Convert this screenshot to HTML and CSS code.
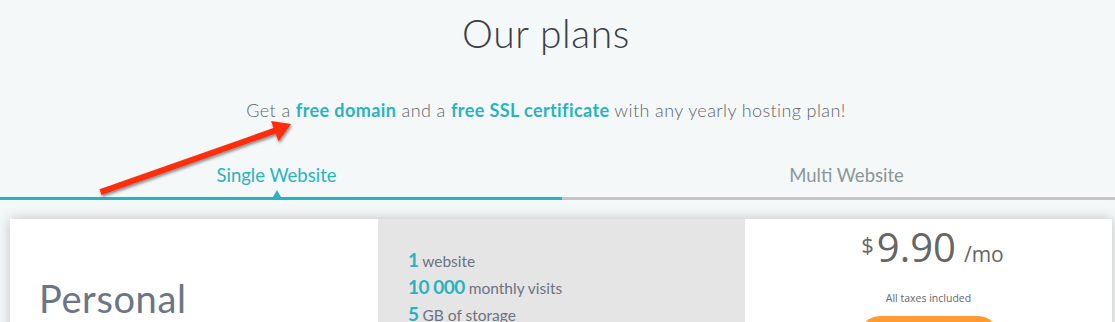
FILE: index.html
```html
<!DOCTYPE html>
<html lang="en">
<head>
<meta charset="utf-8">
<title>Our plans</title>
<link rel="stylesheet" href="styles.css">
</head>
<body>
<div class="page">
  <header class="hero">
    <h1 class="title">Our plans</h1>
    <p class="sub">Get a <strong>free domain</strong> and a <strong>free SSL certificate</strong> with any yearly hosting plan!</p>
  </header>
  <nav class="tabs">
    <div class="tab active"><span class="tab-label">Single Website</span></div>
    <div class="tab"><span class="tab-label">Multi Website</span></div>
  </nav>
  <section class="card">
    <div class="col name-col">
      <h2 class="plan-name">Personal</h2>
    </div>
    <div class="col feat-col">
      <ul class="features">
        <li><b>1</b> website</li>
        <li><b>10 000</b> monthly visits</li>
        <li><b>5</b> GB of storage</li>
      </ul>
    </div>
    <div class="col price-col">
      <div class="price"><span class="cur">$</span><span class="amount">9.90</span><span class="per">/mo</span></div>
      <div class="taxes">All taxes included</div>
      <div class="btn"></div>
    </div>
  </section>
  <svg class="arrow" width="1115" height="322" viewBox="0 0 1115 322">
    <defs>
      <filter id="sh" x="-20%" y="-20%" width="140%" height="140%">
        <feDropShadow dx="1" dy="2" stdDeviation="1.6" flood-color="#000" flood-opacity="0.45"/>
      </filter>
    </defs>
    <g filter="url(#sh)" fill="#ff2d0c" stroke="none">
      <path d="M99.5 189.2 L277.6 126.6 L279.6 132.3 L101.5 194.9 Z"/>
      <path d="M291 124 L271 121 L278.5 141.5 Z"/>
    </g>
  </svg>
</div>
</body>
</html>
```

FILE: styles.css
```css
* { box-sizing: border-box; }
html, body { margin: 0; padding: 0; }
body {
  background: #f4f8f9;
  font-family: Lato, "Open Sans", "Liberation Sans", sans-serif;
  overflow: hidden;
}
.page { position: relative; width: 1115px; height: 322px; overflow: hidden; }
.hero { text-align: center; padding: 10px 23px 0 0; }
.title {
  margin: 0;
  font-family: Lato, "Liberation Sans", sans-serif;
  font-weight: 300;
  font-size: 39px;
  line-height: 46px;
  color: #3a4045;
  letter-spacing: 0.6px;
}
.sub {
  margin: 42px 0 0;
  font-family: Lato, "Liberation Sans", sans-serif;
  font-weight: 300;
  font-size: 18px;
  line-height: 24px;
  letter-spacing: 0.4px;
  color: #5f656a;
}
.sub strong { font-weight: 700; color: #2ab3bd; }
.tabs {
  display: grid;
  grid-template-columns: 562px 569px;
  margin-top: 41px;
}
.tab {
  text-align: center;
  font-size: 18.5px;
  line-height: 24px;
  padding-bottom: 10px;
  color: #8b9698;
  border-bottom: 3px solid #c3c5c6;
}
.tab.active { color: #2ab3bd; border-bottom-color: #28b2bc; padding-right: 9px; }
.tab-label { position: relative; display: inline-block; }
.tab.active .tab-label::after {
  content: "";
  position: absolute;
  left: 50%;
  bottom: -10px;
  margin-left: -4px;
  border-left: 4px solid transparent;
  border-right: 4px solid transparent;
  border-bottom: 7px solid #28b2bc;
}
.card {
  display: grid;
  grid-template-columns: 368px 367px 1fr;
  margin: 19px 3px 0 10px;
  height: 220px;
  background: #fff;
  box-shadow: 0 0 12px rgba(0, 0, 0, 0.22);
}
.name-col { padding: 57px 0 0 29px; }
.plan-name {
  margin: 0;
  font-family: Lato, "Liberation Sans", sans-serif;
  font-weight: 400;
  font-size: 38px;
  line-height: 44px;
  letter-spacing: 0.6px;
  color: #6a7686;
}
.feat-col { background: #e5e5e5; padding: 28px 0 0 30px; }
.features { list-style: none; margin: 0; padding: 0; }
.features li {
  font-size: 15.5px;
  line-height: 26px;
  color: #6b7382;
}
.features b { font-size: 19px; font-weight: 700; color: #2ab3bd; letter-spacing: -0.5px; }
.price-col { text-align: center; padding-top: 5px; }
.price {
  font-family: "Open Sans", "Liberation Sans", sans-serif;
  color: #666;
  line-height: 40px;
  padding-left: 8px;
}
.cur { font-size: 22px; vertical-align: 9px; margin-right: 3px; }
.amount { font-size: 40px; }
.per { font-size: 21px; margin-left: 8px; }
.taxes {
  margin-top: 15px;
  font-family: "Open Sans", "Liberation Sans", sans-serif;
  font-size: 10.5px;
  line-height: 14px;
  color: #666;
}
.btn {
  width: 138px;
  height: 40px;
  margin: 11px auto 0;
  border-radius: 20px;
  background: #ff9b31;
}
.arrow { position: absolute; left: 0; top: 0; pointer-events: none; }
```
